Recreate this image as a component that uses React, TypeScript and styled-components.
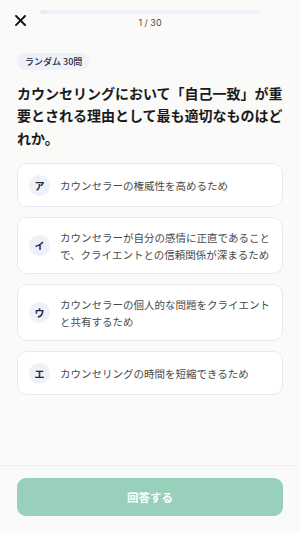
import React from "react";
import styled, { createGlobalStyle } from "styled-components";

const Global = createGlobalStyle`
  html, body { margin: 0; padding: 0; background: #fafaf9; }
  body { font-family: "Noto Sans CJK JP", "Noto Sans", sans-serif; }
  * { box-sizing: border-box; }
`;

const Page = styled.div`
  min-height: 100vh;
  display: flex;
  flex-direction: column;
  background: #fafaf9;
`;

const Header = styled.header`
  display: grid;
  grid-template-columns: 40px 1fr 40px;
  padding-top: 10px;
`;

const CloseButton = styled.button`
  border: 0;
  background: none;
  padding: 0;
  margin-top: 2px;
  width: 40px;
  height: 16px;
  display: flex;
  justify-content: center;
  align-items: center;
  color: #111;
`;

const ProgressCol = styled.div`
  display: flex;
  flex-direction: column;
  align-items: center;
`;

const Track = styled.div`
  width: 100%;
  height: 4px;
  border-radius: 2px;
  background: #eef2f8;
  overflow: hidden;
`;

const Fill = styled.div`
  height: 100%;
  background: #e6ecf4;
`;

const Counter = styled.div`
  margin-top: 3px;
  font-family: Inter, "Noto Sans CJK JP", sans-serif;
  font-size: 9px;
  line-height: 12px;
  color: #4a4a4a;
`;

const Main = styled.main`
  flex: 1;
  padding: 24px 17px 0;
  display: flex;
  flex-direction: column;
  align-items: flex-start;
`;

const Badge = styled.span`
  display: inline-flex;
  align-items: center;
  height: 17px;
  padding: 0 8px;
  border-radius: 9px;
  background: #eef2f8;
  color: #1e2a44;
  font-size: 9px;
  font-weight: 500;
`;

const Question = styled.h1`
  margin: 12px 0 0;
  font-size: 14px;
  line-height: 22.4px;
  font-weight: 700;
  color: #1a1a1a;
  width: 100%;
`;

const Options = styled.ul`
  list-style: none;
  margin: 14px 0 0;
  padding: 0;
  width: 100%;
  display: flex;
  flex-direction: column;
  gap: 10px;
`;

const OptionCard = styled.li`
  display: flex;
  align-items: center;
  gap: 10px;
  padding: 10.5px 12px 10.5px 11px;
  border: 1px solid #e6eaf0;
  border-radius: 10px;
  background: #ffffff;
`;

const Letter = styled.span`
  flex: none;
  width: 21px;
  height: 21px;
  border-radius: 50%;
  background: #eef2f8;
  display: flex;
  align-items: center;
  justify-content: center;
  font-size: 10px;
  font-weight: 700;
  color: #1e2a44;
`;

const OptionText = styled.span`
  font-size: 10.5px;
  line-height: 17px;
  color: #4a4a4a;
`;

const Footer = styled.footer`
  border-top: 1px solid #f0f1f5;
  padding: 12px 17px 17px;
`;

const SubmitButton = styled.button`
  width: 100%;
  height: 38px;
  border: 0;
  border-radius: 9px;
  background: #98d0bc;
  color: #ffffff;
  font-family: "Noto Sans CJK JP", sans-serif;
  font-size: 11.5px;
  font-weight: 700;
`;

const options = [
  { key: "ア", text: "カウンセラーの権威性を高めるため" },
  { key: "イ", text: "カウンセラーが自分の感情に正直であることで、クライエントとの信頼関係が深まるため" },
  { key: "ウ", text: "カウンセラーの個人的な問題をクライエントと共有するため" },
  { key: "エ", text: "カウンセリングの時間を短縮できるため" },
];

export default function App() {
  return (
    <Page>
      <Global />
      <Header>
        <CloseButton aria-label="close">
          <svg width="11" height="11" viewBox="0 0 11 11">
            <path d="M1 1 L10 10 M10 1 L1 10" stroke="#111" strokeWidth="1.9" strokeLinecap="square" />
          </svg>
        </CloseButton>
        <ProgressCol>
          <Track>
            <Fill style={{ width: `${(1 / 30) * 100}%` }} />
          </Track>
          <Counter>1 / 30</Counter>
        </ProgressCol>
        <div />
      </Header>
      <Main>
        <Badge>ランダム 30問</Badge>
        <Question>カウンセリングにおいて「自己一致」が重要とされる理由として最も適切なものはどれか。</Question>
        <Options>
          {options.map((o) => (
            <OptionCard key={o.key}>
              <Letter>{o.key}</Letter>
              <OptionText>{o.text}</OptionText>
            </OptionCard>
          ))}
        </Options>
      </Main>
      <Footer>
        <SubmitButton>回答する</SubmitButton>
      </Footer>
    </Page>
  );
}
